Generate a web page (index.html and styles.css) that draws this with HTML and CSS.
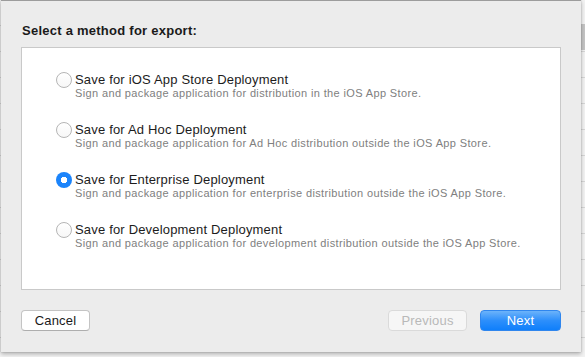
FILE: index.html
```html
<!DOCTYPE html>
<html lang="en">
<head>
    <meta charset="UTF-8">
    <meta name="viewport" content="width=device-width, initial-scale=1.0">
    <title>Select a method for export</title>
    <link rel="stylesheet" href="styles.css">
</head>
<body>
    <div class="scroll-thumb"></div>
    <div class="sheet">
        <h1 class="sheet-title">Select a method for export:</h1>

        <div class="options">
            <label class="option">
                <span class="radio"></span>
                <span class="option-text">
                    <span class="option-name">Save for iOS App Store Deployment</span>
                    <span class="option-desc">Sign and package application for distribution in the iOS App Store.</span>
                </span>
            </label>
            <label class="option">
                <span class="radio"></span>
                <span class="option-text">
                    <span class="option-name">Save for Ad Hoc Deployment</span>
                    <span class="option-desc">Sign and package application for Ad Hoc distribution outside the iOS App Store.</span>
                </span>
            </label>
            <label class="option">
                <span class="radio checked"></span>
                <span class="option-text">
                    <span class="option-name">Save for Enterprise Deployment</span>
                    <span class="option-desc">Sign and package application for enterprise distribution outside the iOS App Store.</span>
                </span>
            </label>
            <label class="option">
                <span class="radio"></span>
                <span class="option-text">
                    <span class="option-name">Save for Development Deployment</span>
                    <span class="option-desc">Sign and package application for development distribution outside the iOS App Store.</span>
                </span>
            </label>
        </div>

        <div class="buttons">
            <button class="btn btn-cancel">Cancel</button>
            <span class="spacer"></span>
            <button class="btn btn-prev" disabled>Previous</button>
            <button class="btn btn-next">Next</button>
        </div>
    </div>
</body>
</html>
```

FILE: styles.css
```css
html, body {
    margin: 0;
    height: 100%;
}
body {
    position: relative;
    overflow: hidden;
    font-family: "Liberation Sans", Arial, sans-serif;
    background-color: #f2f2f2;
    background-image: repeating-linear-gradient(to bottom, transparent 0, transparent 25px, #d6d6d6 25px, #d6d6d6 26px);
}
.scroll-thumb {
    position: absolute;
    right: 0;
    top: 24px;
    width: 4px;
    height: 26px;
    background: #c4c4c4;
}
.sheet {
    box-sizing: border-box;
    width: 580px;
    height: 352px;
    margin-left: 1px;
    padding: 0 20px;
    background: #ececec;
    border-top: 1px solid #9c9c9c;
    box-shadow: 0 2px 4px rgba(0, 0, 0, 0.28), 0 0 1px rgba(0, 0, 0, 0.25);
    display: flex;
    flex-direction: column;
    position: relative;
}
.sheet-title {
    margin: 22px 0 0 1px;
    font-size: 13px;
    line-height: 16px;
    font-weight: bold;
    letter-spacing: 0.25px;
    color: #1a1a1a;
}
.options {
    margin-top: 8px;
    height: 243px;
    box-sizing: border-box;
    background: #fff;
    border: 1px solid #c9c9c9;
    padding: 25px 0 0 34px;
    display: flex;
    flex-direction: column;
    gap: 24px;
}
.option {
    display: flex;
    align-items: flex-start;
    gap: 3px;
}
.radio {
    box-sizing: border-box;
    width: 16px;
    height: 16px;
    margin-top: -1px;
    border-radius: 50%;
    border: 1px solid #b5b5b5;
    background: linear-gradient(#ffffff, #f7f7f7);
    flex-shrink: 0;
}
.radio.checked {
    border: none;
    background: #1b84fb radial-gradient(circle, #fff 0, #fff 3px, transparent 3.5px);
}
.option-text {
    display: flex;
    flex-direction: column;
}
.option-name {
    font-size: 13px;
    line-height: 14px;
    letter-spacing: 0.18px;
    color: #1c1c1c;
}
.option-desc {
    font-size: 11px;
    line-height: 12px;
    letter-spacing: 0.37px;
    color: #808080;
}
.buttons {
    margin-top: 20px;
    display: flex;
    gap: 13px;
}
.spacer {
    flex: 1;
}
.btn {
    box-sizing: border-box;
    height: 21px;
    padding: 0;
    border-radius: 4px;
    font-family: "Liberation Sans", Arial, sans-serif;
    font-size: 13px;
    line-height: 19px;
    letter-spacing: 0.2px;
}
.btn-cancel {
    width: 69px;
    background: #fff;
    border: 1px solid #c4c4c4;
    border-bottom-color: #aeaeae;
    color: #1a1a1a;
}
.btn-prev {
    width: 79px;
    background: #f6f6f6;
    border: 1px solid #dadada;
    color: #b9b9b9;
}
.btn-next {
    width: 81px;
    background: linear-gradient(#6cb3fa, #2d8ffb 50%, #0f7ffb);
    border: 1px solid #2f86ee;
    color: #fff;
}
```
